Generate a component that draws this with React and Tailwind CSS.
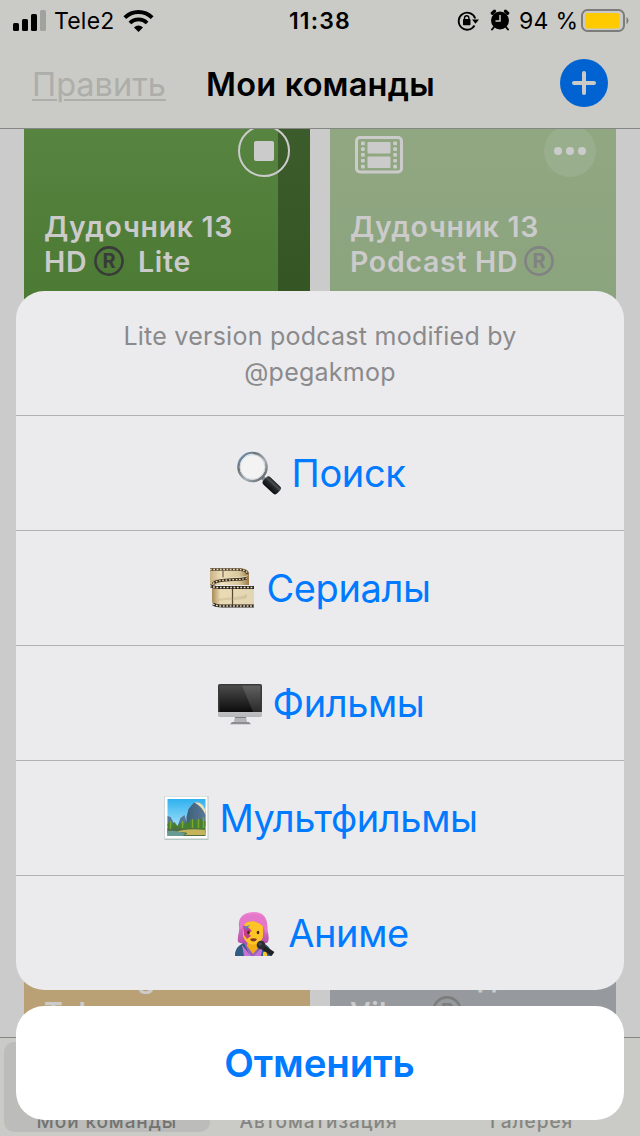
import React from "react";

const Magnifier = () => (
  <svg width="46" height="46" viewBox="0 0 46 46">
    <defs>
      <linearGradient id="mg-ring" x1="0" y1="0" x2="1" y2="1">
        <stop offset="0" stopColor="#6f9cc4" />
        <stop offset=".3" stopColor="#6e7478" />
        <stop offset=".6" stopColor="#a9b2ba" />
        <stop offset="1" stopColor="#4b5054" />
      </linearGradient>
      <linearGradient id="mg-handle" x1="0" y1="1" x2="0" y2="0">
        <stop offset="0" stopColor="#0c0d0e" />
        <stop offset=".5" stopColor="#25282a" />
        <stop offset=".75" stopColor="#4b5053" />
        <stop offset="1" stopColor="#1b1c1d" />
      </linearGradient>
    </defs>
    <path d="M26 26l5 5" stroke="#85898c" strokeWidth="4" />
    <rect x="-3" y="-5" width="19" height="10" rx="3" transform="translate(31 30) rotate(43)" fill="url(#mg-handle)" />
    <circle cx="16.500" cy="16" r="14" fill="#f3f3f4" stroke="url(#mg-ring)" strokeWidth="2.600" />
    <circle cx="16.500" cy="16" r="12.400" fill="none" stroke="#d3d7da" strokeWidth="1" />
    <path d="M5.500 11A12.5 12.5 0 0 1 16.500 3" fill="none" stroke="#dcebf6" strokeWidth="1" />
  </svg>
);

const Film = () => (
  <svg width="46" height="46" viewBox="0 0 46 46">
    <defs>
      <linearGradient id="film-a" x1="0" x2="1">
        <stop offset="0" stopColor="#c9b184" />
        <stop offset=".3" stopColor="#eee0bb" />
        <stop offset=".75" stopColor="#d8c69b" />
        <stop offset="1" stopColor="#9c7b45" />
      </linearGradient>
      <linearGradient id="film-b" x1="0" x2="1">
        <stop offset="0" stopColor="#a98a55" />
        <stop offset=".2" stopColor="#eadbb5" />
        <stop offset="1" stopColor="#e2d5b2" />
      </linearGradient>
    </defs>
    <path d="M0 2h28c7 0 11 2 11 6v11H0z" fill="url(#film-a)" />
    <path d="M0 3.500h27c7 0 10 1.500 10.500 4.500" fill="none" stroke="#4a3c28" strokeWidth="2.600" />
    <path d="M0 3.500h27c7 0 10 1.500 10.500 4.500" fill="none" stroke="#e9dcc0" strokeWidth="1.300" strokeDasharray="1.700 1.600" />
    <path d="M13 5v8" stroke="#5b4b31" strokeWidth="1" />
    <path d="M38 9c-2 6-36 3-36 11h42v21H10c-5 0-8-2-8-7V17c2-5 9-6 20-6 9 0 15-1 16-2z" fill="url(#film-b)" />
    <path d="M37 12c-6 3-30 0-34 6" fill="none" stroke="#34291a" strokeWidth="2.800" />
    <path d="M37 12c-6 3-30 0-34 6" fill="none" stroke="#eadcb9" strokeWidth="1.300" strokeDasharray="1.700 1.600" />
    <path d="M0 19.500q3 2 9 2h35M3 38q3 2 9 2h32" fill="none" stroke="#2b2319" strokeWidth="3" />
    <path d="M0 19.500q3 2 9 2h35M3 38q3 2 9 2h32" fill="none" stroke="#eee3c9" strokeWidth="1.500" strokeDasharray="1.800 1.600" />
    <path d="M22.500 23v16" stroke="#554731" strokeWidth="1.200" />
    <path d="M8 33c7-2 22-1 29-5v4c-8 3-20 1-29 3z" fill="#a99874" opacity=".25" />
  </svg>
);

const Monitor = () => (
  <svg width="46" height="46" viewBox="0 0 46 46">
    <defs>
      <linearGradient id="mon-s" x1="0" y1="0" x2="0" y2="1">
        <stop offset="0" stopColor="#4b4b4c" />
        <stop offset="1" stopColor="#0c0c0d" />
      </linearGradient>
      <linearGradient id="mon-c" x1="0" y1="0" x2="0" y2="1">
        <stop offset="0" stopColor="#f0f0f1" />
        <stop offset="1" stopColor="#b6b7b9" />
      </linearGradient>
    </defs>
    <path d="M18 35h11l1 6H17z" fill="#b2b4b7" />
    <path d="M18 35h11v2H18z" fill="#7c7e81" />
    <path d="M15 41h17l2 2.200H13z" fill="#8b8d90" />
    <rect x="1" y="3" width="44" height="33" rx="1.800" fill="url(#mon-c)" />
    <path d="M1 31V4.800Q1 3 2.800 3h40.400Q45 3 45 4.800V31z" fill="#39393a" />
    <rect x="2.500" y="4.500" width="41" height="26.500" fill="url(#mon-s)" />
    <path d="M25 4.500h18.500V31H36z" fill="#fff" opacity=".12" />
  </svg>
);

const Picture = () => (
  <svg width="46" height="46" viewBox="0 0 46 46">
    <defs>
      <linearGradient id="pic-sky" x1="0" y1="0" x2="0" y2="1">
        <stop offset="0" stopColor="#2fb1f0" />
        <stop offset="1" stopColor="#c9f0fa" />
      </linearGradient>
      <linearGradient id="pic-rock" x1="0" x2="1">
        <stop offset="0" stopColor="#3e5f7c" />
        <stop offset="1" stopColor="#587895" />
      </linearGradient>
    </defs>
    <g transform="translate(.5 -1)">
      <rect x="1" y="1" width="44" height="44" fill="#b7c6c2" />
      <rect x="1.500" y="1.500" width="42.500" height="42" fill="#fff" />
      <rect x="4" y="4" width="38" height="37" fill="url(#pic-sky)" />
      <path d="M4 21l3 1 5 9H4zM14 31l3-8 4-3 3 11z" fill="#55789a" />
      <path d="M23 31v-9l2-8 5-6q4-2 8 2l4 7v14z" fill="url(#pic-rock)" />
      <path d="M31 7.500q5-1 8 2.500l3 5v5q-3-8-11-12.500z" fill="#efe0b5" />
      <path d="M4 29l2-3 2 4 3-3 3 4 3-3 3 3 2-5 3 2 2-4 3 4 2-4 3 3 2-4 3 4 2-1v12H4z" fill="#477e35" />
      <path d="M4 33q9-2 15 1l10-1 13 2v6H4z" fill="#4e6d42" />
      <path d="M13 37q9-4 29-2v5H21q8-3-8-3z" fill="#c6b45c" />
      <path d="M4 36q6-1 12 1 9 1 3 4H4z" fill="#679b94" />
      <path d="M7 26v8m12-8v7m10-9v9m6-9v9m5-11v11" stroke="#79a82c" strokeWidth="1.500" />
    </g>
  </svg>
);

const Singer = () => (
  <svg width="46" height="46" viewBox="0 0 46 46">
    <defs>
      <linearGradient id="sing-h" x1="0" y1="0" x2="0" y2="1">
        <stop offset="0" stopColor="#ee86d4" />
        <stop offset="1" stopColor="#b74fa7" />
      </linearGradient>
    </defs>
    <g transform="translate(3 0)">
      <path d="M19 1C8 1 3 7 4 15c1 6-2 9-1 16 4 3 25 4 30 0 2-6-1-10-1-16C32 6 28 1 19 1z" fill="url(#sing-h)" />
      <path d="M0 45c0-8 6-12 13-13h12c7 1 11 6 11 13z" fill="#9b62bd" />
      <path d="M13 29h11v7l-6 7-6-8z" fill="#f3ae15" />
      <path d="M0 45c0-8 4-11 9-13l6 13zM36 45c0-7-2-11-9-13l-7 13z" fill="#315c81" />
      <path d="M7 34l9 11H9zM28 34l-9 11h7z" fill="#c472d8" />
      <path d="M8 13c8-5 19-3 20 3v8c0 6-5 9.500-10 9.500S8.500 29 8 23z" fill="#ffc526" />
      <path d="M8 14l6 3 3 3-4 2 3 3-4 3-3-4z" fill="#c53c93" />
      <path d="M9 16l6-2-4 5z" fill="#5582c3" />
      <path d="M5 19C8 15 12 11 14 7c4 4 10 4 14 8l3 9c4-12 0-21-12-21S4 9 5 19z" fill="#e477c9" />
      <ellipse cx="13.500" cy="21.500" rx="1.300" ry="1.700" fill="#45280d" />
      <ellipse cx="23" cy="21.500" rx="1.300" ry="1.700" fill="#45280d" />
      <path d="M15 28q3.500-1.500 7 0-1 2.500-3.500 2.500T15 28z" fill="#80352d" />
      <path d="M26 35l12 8" stroke="#222226" strokeWidth="5" />
      <circle cx="26" cy="34" r="4.300" fill="#2d2d31" />
      <circle cx="25" cy="33" r="1.800" fill="#48484d" />
      <path d="M28 41.500q2.500-1.500 3.500 0l1 3.500H28z" fill="#ffc526" />
    </g>
  </svg>
);

const Registered = ({ className }) => (
  <svg width="30" height="30" viewBox="0 0 30 30" className={className}>
    <circle cx="15" cy="15" r="13.600" fill="none" stroke="currentColor" strokeWidth="2.600" />
    <text x="15.500" y="22" textAnchor="middle" fontFamily="Inter" fontWeight="700" fontSize="20" fill="currentColor">R</text>
  </svg>
);

const FilmStrip = () => (
  <svg width="48" height="38" viewBox="0 0 48 38" fill="#cbcbcc">
    <rect x="1.500" y="1.500" width="45" height="34.500" rx="3.500" fill="none" stroke="#cbcbcc" strokeWidth="3" />
    <rect x="12.500" y="6" width="23" height="11.500" rx="1" />
    <rect x="12.500" y="20.500" width="23" height="11.500" rx="1" />
    {[5.5, 11.3, 17.1, 22.9, 28.7].map((y) => (
      <g key={y}>
        <rect x="6" y={y} width="3.800" height="3.700" rx="1" />
        <rect x="38.200" y={y} width="3.800" height="3.700" rx="1" />
      </g>
    ))}
  </svg>
);

const StatusBar = () => (
  <div className="grid h-10 grid-cols-3 items-center text-[23px] leading-10 text-black">
    <div className="flex items-center pl-[13px]">
      <svg width="34" height="22" viewBox="0 0 34 22">
        <rect x="0" y="13" width="6" height="8" rx="1.500" />
        <rect x="9" y="9" width="6" height="12" rx="1.500" />
        <rect x="18" y="4" width="6" height="17" rx="1.500" />
        <rect x="27" y="0" width="6" height="21" rx="1.500" fill="#a0a29e" />
      </svg>
      <span className="ml-[7px] w-[69px] whitespace-nowrap pt-px tracking-[0.2px]">Tele2</span>
      <svg width="31" height="22" viewBox="0 0 30 22" fill="none" stroke="#000" strokeWidth="3.800">
        <path d="M1.300 7.700a19.300 19.300 0 0 1 27.400 0" />
        <path d="M6.400 13a12.200 12.200 0 0 1 17.200 0" />
        <path d="M15 22l-4.500-4.600a6.400 6.400 0 0 1 9 0z" fill="#000" stroke="none" />
      </svg>
    </div>
    <div className="pt-px text-center font-semibold tracking-[1.2px]">11:38</div>
    <div className="flex items-center justify-end pr-[13px]">
      <svg width="22" height="22" viewBox="0 0 22 22">
        <path d="M17.500 15.500A8.500 8.500 0 1 1 18.200 8.500" fill="none" stroke="#000" strokeWidth="1.800" />
        <path d="M15 9.500h7l-3.500 4.200z" />
        <rect x="6" y="9" width="7.500" height="6.200" rx=".7" />
        <path d="M7.500 9.500V8a2.200 2.200 0 0 1 4.400 0v1.500" fill="none" stroke="#000" strokeWidth="1.400" />
      </svg>
      <svg width="20" height="22" viewBox="0 0 20 22" className="-mt-0.5 ml-[11px]">
        <circle cx="10" cy="11.500" r="9" />
        <path d="M2.300 4.200L4.500 2.200M15.500 2.200l2.200 2" stroke="#000" strokeWidth="3.200" strokeLinecap="round" />
        <path d="M4 18l-2 2.500M16 18l2 2.500" stroke="#000" strokeWidth="2" strokeLinecap="round" />
        <path d="M10 6v6H5.500" fill="none" stroke="#cacbc6" strokeWidth="1.500" />
      </svg>
      <span className="ml-[9px] w-[62px] whitespace-nowrap pt-px tracking-[0.3px]">94 %</span>
      <svg width="48" height="24" viewBox="0 0 48 24" className="-mr-0.5">
        <rect x="1" y="1" width="42" height="21" rx="5.500" fill="none" stroke="#7c7d7a" strokeWidth="2" />
        <rect x="4" y="4" width="34.500" height="15.500" rx="3" fill="#ffcb00" />
        <path d="M45.500 8q2 1 2 3.500t-2 3.500z" fill="#7c7d7a" />
      </svg>
    </div>
  </div>
);

const Header = () => (
  <header className="h-[129px] shrink-0 border-b border-[#858784] bg-[#cacbc6]">
    <StatusBar />
    <div className="flex h-[86px] items-center pl-8 pr-8">
      <span className="w-[174px] whitespace-nowrap pt-[5px] text-[32.5px] text-[#adaeaa] underline decoration-2 underline-offset-[3px]">Править</span>
      <h1 className="grow whitespace-nowrap pt-[5px] text-[32.5px] font-semibold tracking-[0.2px] text-black">Мои команды</h1>
      <button className="flex size-12 shrink-0 items-center justify-center rounded-full bg-[#0063d1]">
        <svg width="24" height="24" viewBox="0 0 24 24">
          <path d="M12 2v20M2 12h20" stroke="#cacbc6" strokeWidth="4" strokeLinecap="round" />
        </svg>
      </button>
    </div>
  </header>
);

const Shortcuts = () => (
  <main className="grid min-h-0 grow grid-cols-2 grid-rows-[180px_180px] content-between gap-x-5 overflow-hidden bg-[#cbcbcc] px-6 text-[28.5px] font-semibold leading-[35px] text-[#cbcbcc]">
    <article className="grid grid-cols-[254px_32px] bg-linear-to-b from-[#578440] to-[#4b7a34]">
      <div className="flex flex-col pl-5">
        <div className="-mr-3 -mt-1 flex justify-end">
          <svg width="52" height="52" viewBox="0 0 52 52" className="relative z-10">
            <circle cx="26" cy="26" r="25" fill="none" stroke="#cbcbcc" strokeWidth="2" />
            <rect x="16" y="16" width="20" height="20" rx="2" fill="#cbcbcc" />
          </svg>
        </div>
        <div className="mt-8 whitespace-nowrap tracking-[0.7px]">Дудочник 13</div>
        <div className="flex items-center whitespace-nowrap tracking-[0.7px]">
          <span className="w-[50px]">HD</span>
          <Registered className="-mt-px text-[#393b38]" />
          <span className="ml-[14px]">Lite</span>
        </div>
      </div>
      <div className="bg-linear-to-b from-[#3d5c2c] to-[#355424]" />
    </article>
    <article className="flex flex-col bg-linear-to-b from-[#91a782] to-[#8aa47e] px-5">
      <div className="-mt-1 flex justify-between pl-[5px]">
        <div className="pt-[11px]"><FilmStrip /></div>
        <svg width="52" height="52" viewBox="0 0 52 52" fill="#cbcbcc">
          <circle cx="26" cy="26" r="26" fill="#99ae8d" />
          <circle cx="14" cy="26" r="4" /><circle cx="26" cy="26" r="4" /><circle cx="38" cy="26" r="4" />
        </svg>
      </div>
      <div className="mt-8 whitespace-nowrap tracking-[0.7px]">Дудочник 13</div>
      <div className="flex items-center whitespace-nowrap tracking-[0.7px]">
        <span className="w-[174px]">Podcast HD</span>
        <Registered className="-mt-px text-[#828282]" />
      </div>
    </article>
    <article className="flex flex-col justify-end bg-[#b9a175] px-5 pb-[7px]">
      <div className="whitespace-nowrap tracking-[0.5px]">Message</div>
      <div className="whitespace-nowrap tracking-[0.5px]">Telegram</div>
    </article>
    <article className="flex flex-col justify-end bg-[#96999d] px-5 pb-[7px]">
      <div className="whitespace-nowrap">Каналов для</div>
      <div className="flex items-center whitespace-nowrap">
        <span className="w-[82px] tracking-[0.4px]">Viber</span>
        <Registered className="-mt-1 text-[#7c7d7c]" />
      </div>
    </article>
  </main>
);

const TabBar = () => (
  <nav className="flex h-[99px] shrink-0 border-t border-[#858784] bg-[#cacbc6] px-1 pb-1 pt-1 text-[19px] font-medium leading-5 text-[#848582]">
    <div className="flex w-[206px] items-end justify-center rounded-[10px] bg-[#bcbdba] text-[#727371]">
      <span className="tracking-[0.9px]">Мои команды</span>
    </div>
    <div className="flex w-[218px] items-end justify-center"><span className="tracking-[1px]">Автоматизация</span></div>
    <div className="flex w-[209px] items-end justify-center"><span className="tracking-[1px]">Галерея</span></div>
  </nav>
);

const actions = [
  { Icon: Magnifier, label: "Поиск" },
  { Icon: Film, label: "Сериалы" },
  { Icon: Monitor, label: "Фильмы" },
  { Icon: Picture, label: "Мультфильмы" },
  { Icon: Singer, label: "Аниме" },
];

const ActionSheet = () => (
  <div className="absolute inset-0 z-20 flex flex-col justify-end gap-4 px-4 pb-4">
    <section className="overflow-hidden rounded-[28px] bg-[#ebebed]">
      <p className="h-[124px] pt-[27px] text-center text-[25px] leading-9 tracking-[0.25px] text-[#8a8a8c]">
        Lite version podcast modified by<br />@pegakmop
      </p>
      {actions.map(({ Icon, label }) => (
        <button key={label} className="flex h-[115px] w-full items-center justify-center gap-2.5 border-t border-[#b0b0b2] pl-px pt-px text-[38px] text-[#007aff]">
          <Icon />
          <span className="whitespace-nowrap pb-px tracking-[-0.4px]">{label}</span>
        </button>
      ))}
    </section>
    <button className="h-[114px] shrink-0 rounded-[28px] bg-white pr-px pt-px text-[38.5px] font-semibold tracking-[-0.1px] text-[#007aff]">Отменить</button>
  </div>
);

export default function App() {
  return (
    <div className="relative flex h-[1136px] w-[640px] flex-col overflow-hidden bg-[#cbcbcc] font-['Inter','Liberation_Sans',sans-serif]">
      <Header />
      <Shortcuts />
      <TabBar />
      <ActionSheet />
    </div>
  );
}
